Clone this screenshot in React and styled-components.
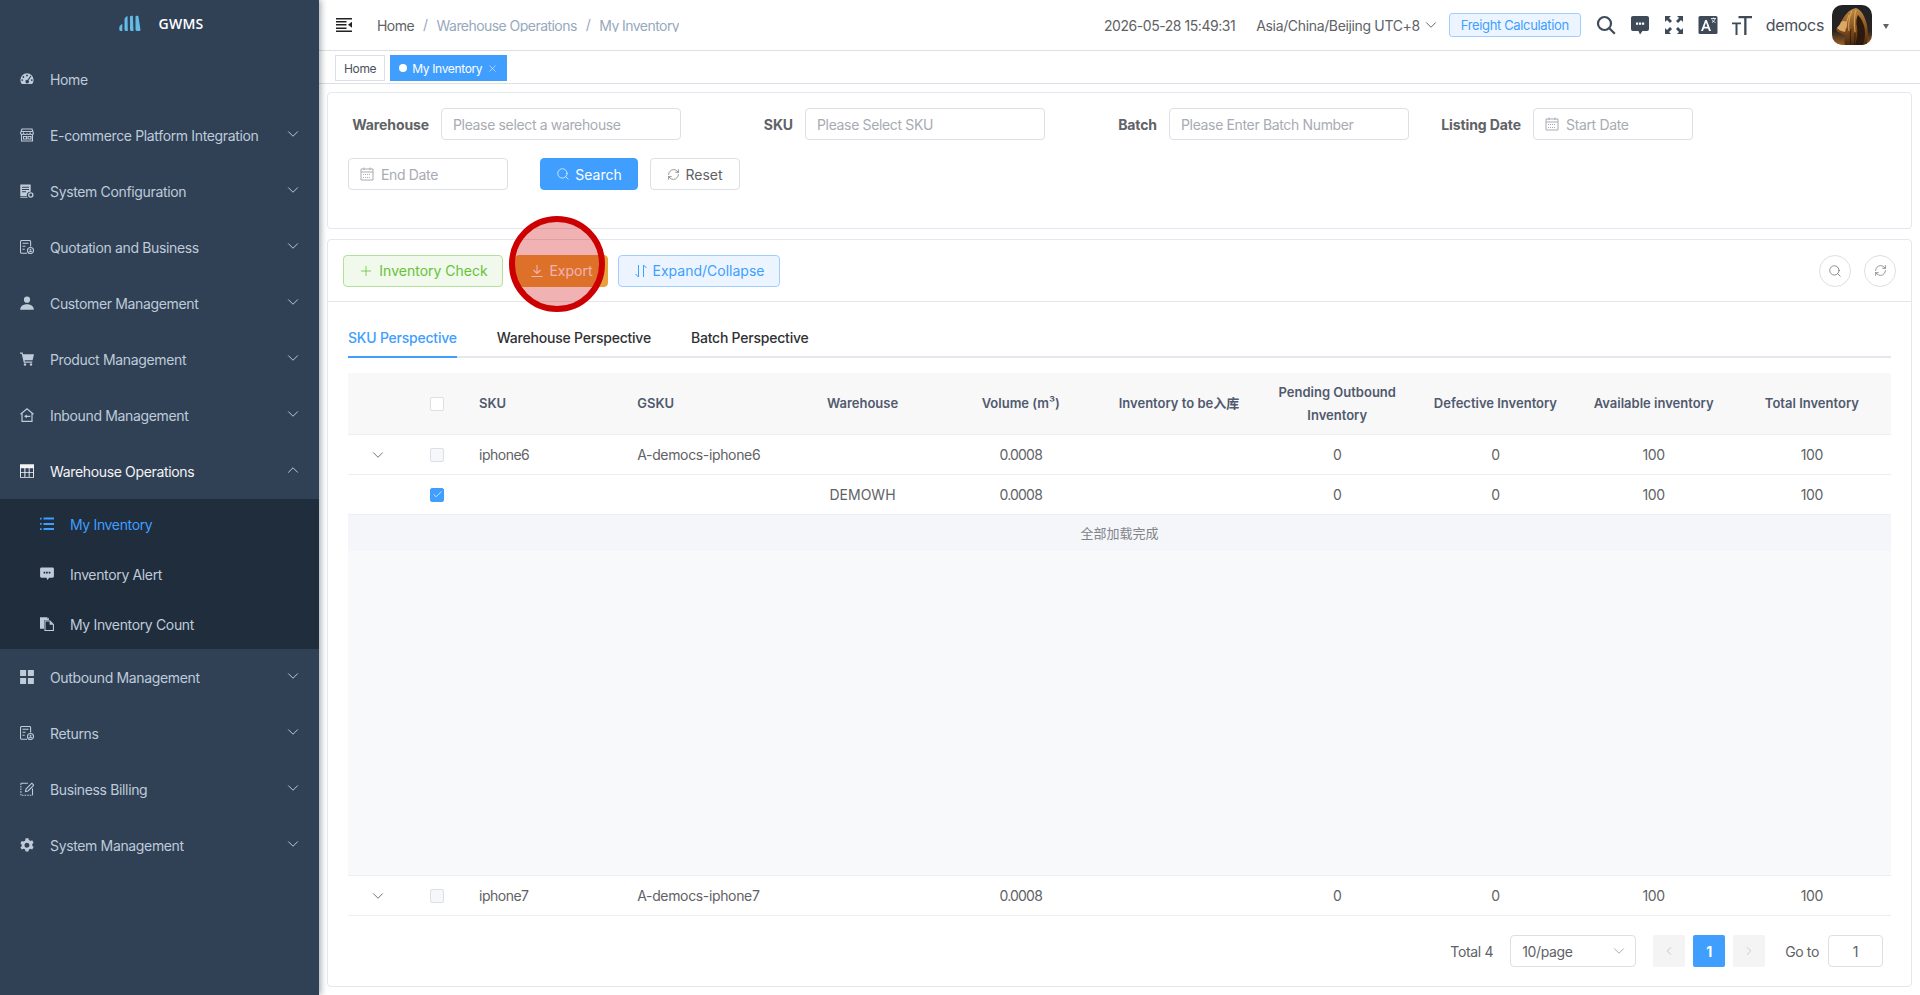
import React from "react";
import styled, { createGlobalStyle } from "styled-components";
import { ChevronDown, ChevronUp, ChevronLeft, ChevronRight, Search, RefreshCw, Plus, X, Check } from "lucide-react";

const Global = createGlobalStyle`
  html, body { margin: 0; padding: 0; height: 100%; background: #fff; overflow: hidden; }
  #root { height: 100%; }
  * { box-sizing: border-box; }
  body { font-family: Inter, "Noto Sans CJK SC", "Liberation Sans", sans-serif; font-size: 14px; color: #606266; letter-spacing: -0.35px; }
`;

const Shell = styled.div`display: flex; width: 1920px; height: 995px; position: relative; overflow: hidden;`;
const Sidebar = styled.aside`
  width: 319px; flex: none; background: #304156; box-shadow: 2px 0 6px rgba(0,21,41,.35); z-index: 2;
`;
const Logo = styled.div`
  height: 51px; display: flex; align-items: center; justify-content: center; gap: 18px; padding: 0 0 5px 3px;
  font-size: 14px; font-weight: 600; color: #fff; font-family: "Open Sans", Inter, sans-serif; letter-spacing: 0.2px;
`;
const MenuRow = styled.div`
  height: 56px; display: flex; align-items: center; padding: 0 20px; position: relative;
  color: ${p => (p.$open ? "#f4f4f5" : "#bfcbd9")}; 
`;
const IconSlot = styled.span`
  width: 14px; height: 14px; display: flex; margin-right: 16px; flex: none;
  svg { width: 14px; height: 14px; display: block; fill: currentColor; }
`;
const Caret = styled.span`
  margin-left: auto; margin-right: -3px; display: flex; color: #bfcbd9;
  position: relative; top: -1px;
`;
const SubMenu = styled.div`background: #1f2d3d; height: 150px;`;
const SubRow = styled.div`
  height: 50px; display: flex; align-items: center; padding-left: 40px;
  color: ${p => (p.$active ? "#409eff" : "#bfcbd9")};
`;
const Main = styled.main`flex: 1; min-width: 0; display: flex; flex-direction: column;`;
const TopBar = styled.header`
  height: 51px; flex: none; border-bottom: 1px solid #dcdfe6; display: flex; align-items: center; padding-left: 17px; color: #606266;
`;
const Crumbs = styled.nav`display: flex; margin-left: 25px; height: 16px; overflow: hidden; align-items: flex-start; margin-top: -2px; letter-spacing: -0.55px;`;
const Crumb = styled.span`color: ${p => (p.$dim ? "#97a8be" : "#606266")}; line-height: 19px;`;
const Sep = styled.span`color: #97a8be; margin: 0 9px; line-height: 17px;`;
const TopRight = styled.div`margin-left: auto; display: flex; align-items: center; color: #606266;`;
const Clock = styled.span`margin-right: 21px; white-space: nowrap; letter-spacing: -0.45px;`;
const Zone = styled.span`display: flex; align-items: center; gap: 2px; margin-right: 9px; white-space: nowrap;`;
const Freight = styled.button`
  height: 24px; width: 132px; padding: 0; font: inherit; font-size: 13px; letter-spacing: -0.35px; color: #409eff; background: #ecf5ff;
  border: 1px solid #a0cfff; border-radius: 3px; margin-right: 15px;
`;
const TopIcon = styled.span`
  width: 20px; height: 20px; display: flex; margin-right: 14px; color: #3f4a59;
  svg { width: 20px; height: 20px; display: block; }
`;
const UserName = styled.span`font-size: 16px; color: #4a4f57; margin-right: 8px;`;
const Avatar = styled.span`width: 40px; height: 40px; border-radius: 10px; overflow: hidden; display: block; svg { display: block; }`;
const DropCaret = styled.span`
  width: 0; height: 0; margin: 2px 31px 0 11px; border-left: 3.5px solid transparent; border-right: 3.5px solid transparent; border-top: 5px solid #606266;
`;
const TagBar = styled.div`
  height: 33px; flex: none; border-bottom: 1px solid #dcdfe6; padding: 4px 0 0 16px; display: flex; gap: 5px; align-items: flex-start;
`;
const Tag = styled.span`
  height: 26px; display: flex; align-items: center; font-size: 12px; padding: 0 8px; white-space: nowrap;
  border: 1px solid ${p => (p.$active ? "#409eff" : "#dcdfe6")};
  background: ${p => (p.$active ? "#409eff" : "#fff")};
  color: ${p => (p.$active ? "#fff" : "#495060")};
`;
const Dot = styled.i`width: 8px; height: 8px; background: #fff; border-radius: 50%; margin-right: 5px;`;
const TagClose = styled.span`display: flex; margin-left: 5px; margin-top: 1px;`;
const Content = styled.div`flex: 1; padding: 8px; display: flex; flex-direction: column; gap: 10px; min-height: 0;`;
const Card = styled.section`border: 1px solid #e4e7ed; border-radius: 4px; background: #fff;`;
const FilterCard = styled(Card)`height: 137px; flex: none; padding: 15px 0 0 13px;`;
const FormRow = styled.div`display: flex; align-items: center; height: 32px; margin-bottom: 18px;`;
const Field = styled.div`display: flex; align-items: center; width: 340px; margin-right: 24px;  &:last-child { margin-right: 0; width: 260px; }`;
const Label = styled.label`width: 100px; flex: none; padding-right: 12px; text-align: right; font-weight: 700; color: #606266; letter-spacing: -0.1px;`;
const Input = styled.div`
  height: 32px; width: ${p => p.$w || 240}px; flex: none; border: 1px solid #dcdfe6; border-radius: 4px; display: flex; align-items: center; padding: 0 11px;
  color: #a8abb2; font-size: 14px; white-space: nowrap;
  svg { margin-right: 7px; flex: none; color: #a8abb2; }
`;
const DateInput = styled(Input)`margin-left: ${p => p.$ml || 0}px;`;
const Btn = styled.button`
  height: 32px; padding: 0; font: inherit; font-size: 14px; letter-spacing: 0; width: ${p => p.$w}px; margin-left: ${p => p.$ml || 0}px; border-radius: 4px; flex: none;
  display: flex; align-items: center; justify-content: center; gap: 5px;
  color: ${p => p.$color}; background: ${p => p.$bg}; border: 1px solid ${p => p.$border};
`;
const TableCard = styled(Card)`flex: 1; display: flex; flex-direction: column; min-height: 0;`;
const Toolbar = styled.div`
  height: 62px; flex: none; border-bottom: 1px solid #e4e7ed; display: flex; align-items: center; padding: 0 15px;
`;
const Spacer = styled.div`flex: 1;`;
const Circle = styled.span`
  width: 32px; height: 32px; flex: none; border-radius: 50%; border: 1px solid #dcdfe6; display: flex; align-items: center; justify-content: center; color: #606266; margin-left: ${p => p.$ml || 0}px;
`;
const Body = styled.div`flex: 1; padding: 19px 20px 0 20px; display: flex; flex-direction: column; min-height: 0;`;
const Tabs = styled.div`display: flex; gap: 40px; border-bottom: 2px solid #e4e7ed; height: 37px; flex: none; margin-bottom: 15px;`;
const TabItem = styled.div`
  height: 37px; line-height: 34px; font-weight: 500; letter-spacing: -0.22px; color: ${p => (p.$active ? "#409eff" : "#303133")};
  border-bottom: 2px solid ${p => (p.$active ? "#409eff" : "transparent")}; white-space: nowrap;
`;
const Grid = styled.div`
  display: grid; grid-template-columns: 59px 60px repeat(9, 1fr); align-items: center; border-bottom: 1px solid #ebeef5; flex: none;
  height: ${p => p.$h || 40}px; background: ${p => p.$bg || "#fff"};
`;
const Cell = styled.div`
  padding: 0 ${p => (p.$left ? "12px" : "4px")}; text-align: ${p => (p.$left ? "left" : "center")}; color: #606266; white-space: nowrap; display: ${p => (p.$flex ? "flex" : "block")}; justify-content: center; min-width: 0;
  letter-spacing: ${p => p.$ls ?? -0.35}px;
`;
const HeadCell = styled(Cell)`font-weight: 600; font-size: 13px; color: #515a6e; line-height: 23px; white-space: normal; letter-spacing: 0;`;
const Box = styled.span`
  width: 14px; height: 14px; border-radius: 2px; display: flex; align-items: center; justify-content: center; color: #fff;
  border: 1px solid ${p => (p.$checked ? "#409eff" : "#dcdfe6")}; background: ${p => (p.$checked ? "#409eff" : p.$dis ? "#f5f7fa" : "#fff")};
`;
const Expanded = styled.div`flex: 1; min-height: 0; background: #f8f9fa; border-bottom: 1px solid #ebeef5; display: flex; flex-direction: column;`;
const LoadDone = styled.div`height: 36px; flex: none; background: #f4f6f9; font-size: 13px; letter-spacing: 0; color: #82848a; text-align: center; line-height: 36px; font-family: "Noto Sans CJK SC", sans-serif;`;
const Pager = styled.div`height: 70px; flex: none; display: flex; align-items: center; justify-content: flex-end; padding-right: 8px; color: #606266;`;
const Select = styled.div`
  width: 126px; height: 32px; margin-left: 17px; border: 1px solid #dcdfe6; border-radius: 4px; display: flex; align-items: center; justify-content: space-between; padding: 0 7px 0 11px; color: #606266;
  svg { color: #a8abb2; }
`;
const PageBtn = styled.span`
  width: 32px; height: 32px; border-radius: 2px; margin-left: ${p => p.$ml}px; display: flex; align-items: center; justify-content: center; font-weight: 700;
  background: ${p => (p.$active ? "#409eff" : "#f4f4f5")}; color: ${p => (p.$active ? "#fff" : "#a8abb2")};
`;
const GoInput = styled.span`width: 55px; height: 32px; margin-left: 9px; border: 1px solid #dcdfe6; border-radius: 4px; display: flex; align-items: center; justify-content: center;`;
const GoLabel = styled.span`margin-left: 20px;`;
const Ring = styled.div`
  position: absolute; left: 509px; top: 216px; width: 96px; height: 96px; border-radius: 50%; border: 6px solid #c00; background: rgba(204,0,0,.3); z-index: 5; pointer-events: none;
`;

const S = { fill: "none", stroke: "currentColor", strokeWidth: 1.1 };
const icons = {
  gauge: <svg viewBox="0 0 14 14"><path fillRule="evenodd" d="M7 1.2A6.6 6.6 0 0 0 .4 7.8c0 1.6.5 3 1.4 4.2h10.4a6.6 6.6 0 0 0 1.4-4.2A6.6 6.6 0 0 0 7 1.2zM7 2.6a.9.9 0 1 1 0 1.8.9.9 0 0 1 0-1.8zM3.4 4.1a.9.9 0 1 1 0 1.8.9.9 0 0 1 0-1.8zM2.2 7.2a.9.9 0 1 1 0 1.8.9.9 0 0 1 0-1.8zM11.8 7.2a.9.9 0 1 1 0 1.8.9.9 0 0 1 0-1.8zM10.6 3.6l.8.6-2.9 4.3a1.7 1.7 0 1 1-1-.6z"/></svg>,
  store: <svg viewBox="0 0 14 14"><g {...S}><path d="M2 1h10l1.4 4.2c0 .8-.7 1.3-1.6 1.3s-1.5-.5-1.7-1.2c-.3.7-.9 1.2-1.8 1.2S7 6 7 5.3C6.9 6 6.2 6.5 5.3 6.5S3.8 6 3.6 5.3C3.4 6 2.900 6.5 2 6.5S.6 6 .6 5.2z"/><path d="M1.5 6.5V13h11V6.5M1 3.5h12"/><path d="M3.5 8.5h3V11h-3zM8 8.5h3V11H8z"/></g></svg>,
  config: <svg viewBox="0 0 14 14"><path fillRule="evenodd" d="M.3.6h10.4v7.100a3.4 3.4 0 0 0-3.800 4.300H.3zM2 2.700h7v1H2zM2 5h7v1H2zM2 7.300h4v1H2z"/><circle cx="10.800" cy="11" r="2.100" {...S} strokeWidth="1.300"/><path d="M.3 12.700h6.900l.5 1H.3z"/></svg>,
  quote: <svg viewBox="0 0 14 14"><g {...S}><path d="M7 13.300H1.800c-.8 0-1.300-.5-1.300-1.300V1.800C.5 1 1 .5 1.800.5h7.500c.8 0 1.300.5 1.300 1.300V6.500"/><path d="M2.500 3.300h6M2.500 6.200h3M2.500 9.200h2.200"/><circle cx="10.500" cy="10.500" r="3"/></g><circle cx="10.500" cy="9.700" r=".9"/><path d="M8.900 12.100c.2-1 .8-1.400 1.600-1.400s1.400.4 1.600 1.400z"/></svg>,
  user: <svg viewBox="0 0 14 14"><circle cx="7" cy="3.700" r="3.100"/><path d="M.2 13.700c0-3.300 2.800-5.400 6.800-5.400s6.800 2.100 6.800 5.400z"/></svg>,
  cart: <svg viewBox="0 0 14 14"><path d="M0 .6h2.600l.5 1.700H14l-1.400 6H4.600l.3 1.300h7.400v1.200H3.800L1.700 1.800H0z"/><circle cx="5" cy="12.500" r="1.200"/><circle cx="11" cy="12.500" r="1.200"/></svg>,
  inbound: <svg viewBox="0 0 14 14"><path {...S} strokeWidth="1.200" d="M.5 6.300 7 .9l6.500 5.400M2 5.500v7.900h10V5.500"/><path d="M4 8.300 6.800 6.400v1.300h3.500v1.200H6.800v1.300z"/></svg>,
  table: <svg viewBox="0 0 14 14"><path fillRule="evenodd" d="M0 .2h14v13.600H0zM.9 4.300v3.900h3.500V4.300zm4.500 0v3.900h3.300V4.300zm4.200 0v3.900h3.500V4.300zM.9 9.100v3.800h3.500V9.100zm4.500 0v3.800h3.300V9.100zm4.200 0v3.800h3.500V9.100z"/></svg>,
  list: <svg viewBox="0 0 14 14"><path d="M0 .8h1.600v1.700H0zM0 6h1.600v1.700H0zM0 11.300h1.600V13H0zM3.500.6H14v2H3.500zM3.500 5.900H14v2H3.500zM3.500 11.100H14v2H3.500z"/></svg>,
  chat: <svg viewBox="0 0 14 14"><path fillRule="evenodd" d="M1.500.6h11c.8 0 1.400.6 1.400 1.400v7.300c0 .8-.6 1.400-1.400 1.400H9.200l-1.800 2.400-.9-2.400h-5C.7 10.700.1 10.100.1 9.300V2C.1 1.200.7.600 1.500.600zM3.600 4.700v1.700h1.700V4.700zm2.500 0v1.700h1.700V4.700zm2.600 0v1.700h1.700V4.700z"/></svg>,
  copy: <svg viewBox="0 0 14 14"><path d="M0 .2h7.500v3H4v8.600H0zM8.600.6 9 3.200H6.700z"/><path {...S} strokeWidth="1.100" d="M5 4h5l3.400 3.400v6.100H5z"/><path d="M9.600 4.200v3.500h3.800z"/></svg>,
  grid: <svg viewBox="0 0 14 14"><path d="M.1.100h6v6h-6zM7.900.100h6v6h-6zM.1 7.900h6v6h-6zM7.900 7.900h6v6h-6z"/></svg>,
  edit: <svg viewBox="0 0 14 14"><g {...S}><path strokeDasharray="1.600 1" d="M.9 1.300v12h11.600"/><path d="M.9 1.300h7M12.500 6.500v6.800"/><path d="m5.500 9.500.5-2.500 5.800-5.800 2 2-5.800 5.800z"/></g></svg>,
  gear: <svg viewBox="0 0 14 14"><path fillRule="evenodd" d="M5.600.3h2.800l.5 1.800 1.500.8 1.800-.6 1.400 2.400-1.300 1.300v1.700l1.300 1.300-1.400 2.400-1.800-.6-1.500.8-.5 1.800H5.600l-.5-1.800-1.500-.8-1.800.6L.4 9.600l1.300-1.300V6.600L.4 5.300 1.800 2.900l1.800.6 1.500-.8zM7 4.700a2.500 2.500 0 1 0 0 5 2.500 2.500 0 0 0 0-5z"/></svg>,
};

const CalendarIcon = () => (
  <svg width="14" height="14" viewBox="0 0 14 14" fill="none" stroke="currentColor" strokeWidth="1">
    <path d="M1 2h12v11H1zM1 5h12M4 .5V3M10 .5V3" />
    <path strokeDasharray="1 1" d="M3 7.500h8M3 10.500h8" />
  </svg>
);
const ExportIcon = () => (
  <svg width="14" height="14" viewBox="0 0 14 14" fill="none" stroke="currentColor" strokeWidth="1.100">
    <path d="M7 1v8M3.500 6 7 9.500 10.500 6M1.500 12.500h11" />
  </svg>
);

const MENU_TOP = [
  ["gauge", "Home", false], ["store", "E-commerce Platform Integration", true], ["config", "System Configuration", true],
  ["quote", "Quotation and Business", true], ["user", "Customer Management", true], ["cart", "Product Management", true], ["inbound", "Inbound Management", true],
];
const MENU_BOTTOM = [["grid", "Outbound Management"], ["quote", "Returns"], ["edit", "Business Billing"], ["gear", "System Management"]];
const SUB = [["list", "My Inventory", true], ["chat", "Inventory Alert"], ["copy", "My Inventory Count"]];
const HEADERS = ["Warehouse", "Volume (m³)", "Inventory to be入库", "Pending Outbound Inventory", "Defective Inventory", "Available inventory", "Total Inventory"];

function Row({ expand, name, gsku, wh, checked }) {
  return (
    <Grid>
      <Cell $flex>{expand && <ChevronDown size={18} strokeWidth={1.200} />}</Cell>
      <Cell $flex><Box $checked={checked} $dis={!checked}>{checked && <Check size={11} strokeWidth={1.500} />}</Box></Cell>
      <Cell $left $ls={-0.5}>{name}</Cell>
      <Cell $left>{gsku}</Cell>
      <Cell $ls={0}>{wh}</Cell>
      <Cell $ls={-0.8}>0.0008</Cell>
      <Cell />
      <Cell>0</Cell>
      <Cell>0</Cell>
      <Cell>100</Cell>
      <Cell>100</Cell>
    </Grid>
  );
}

export default function App() {
  return (
    <Shell>
      <Global />
      <Sidebar>
        <Logo>
          <svg width="22" height="17" viewBox="0 0 22 17" fill="#62bce6">
            <path d="M.3 12.500c0-1.500 1.600-3 3-3.500v7H1.800c-1 0-1.500-.7-1.500-1.500zM5.500 4.500c0-1.500 1.500-3 3-3.500l.3 15H7.300c-1 0-1.800-.7-1.800-1.500zM11 1.500c0-.8 2.500-1.200 2.900-.3l.6 14.800H12.700c-1 0-1.700-.7-1.700-1.500zM16.500 1.500c0-.8 2.500-1.200 2.900-.3L21.500 15c0 .7-1 1-2 1h-1.300c-.8 0-1.700-.7-1.700-1.500z" />
          </svg>
          <span>GWMS</span>
        </Logo>
        {MENU_TOP.map(([ic, t, c]) => (
          <MenuRow key={t}>
            <IconSlot>{icons[ic]}</IconSlot>{t}
            {c && <Caret><ChevronDown size={18} strokeWidth={1.300} /></Caret>}
          </MenuRow>
        ))}
        <MenuRow $open>
          <IconSlot>{icons.table}</IconSlot>Warehouse Operations
          <Caret><ChevronUp size={18} strokeWidth={1.300} /></Caret>
        </MenuRow>
        <SubMenu>
          {SUB.map(([ic, t, a]) => (
            <SubRow key={t} $active={a}><IconSlot>{icons[ic]}</IconSlot><span>{t}</span></SubRow>
          ))}
        </SubMenu>
        {MENU_BOTTOM.map(([ic, t]) => (
          <MenuRow key={t}>
            <IconSlot>{icons[ic]}</IconSlot>{t}
            <Caret><ChevronDown size={18} strokeWidth={1.300} /></Caret>
          </MenuRow>
        ))}
      </Sidebar>
      <Main>
        <TopBar>
          <svg width="16" height="14" viewBox="0 0 16 14" fill="#222"><path d="M0 0h16v1.600H0zM0 6h10.500v1.600H0zM0 12.400h16V14H0zM0 3h10.500v1.400H0zM0 9.500h10.500v1.400H0zM16 3.800v6l-4-3z" /></svg>
          <Crumbs>
            <Crumb>Home</Crumb><Sep>/</Sep><Crumb $dim>Warehouse Operations</Crumb><Sep>/</Sep><Crumb $dim>My Inventory</Crumb>
          </Crumbs>
          <TopRight>
            <Clock>2026-05-28 15:49:31</Clock>
            <Zone>Asia/China/Beijing UTC+8<ChevronDown size={18} strokeWidth={1.300} /></Zone>
            <Freight>Freight Calculation</Freight>
            <TopIcon><svg viewBox="0 0 20 20" fill="none" stroke="currentColor" strokeWidth="2.200"><circle cx="8.500" cy="8.500" r="6.500" /><path d="m13.300 13.300 5.500 5.500" /></svg></TopIcon>
            <TopIcon><svg viewBox="0 0 20 20" fill="currentColor"><path fillRule="evenodd" d="M3 1h14c1.200 0 2 .8 2 2v11c0 1.200-.8 2-2 2h-4.500L10 19.500 8.500 16H3c-1.200 0-2-.8-2-2V3c0-1.200.8-2 2-2zm3 6.500v2.200h2.200V7.500zm3 0v2.200h2.200V7.500zm3 0v2.200h2.200V7.500z" /></svg></TopIcon>
            <TopIcon><svg viewBox="0 0 20 20" fill="currentColor"><path d="M1 1h6L5 3l3 3-2 2-3-3-2 2zM19 1v6l-2-2-3 3-2-2 3-3-2-2zM1 19v-6l2 2 3-3 2 2-3 3 2 2zM19 19h-6l2-2-3-3 2-2 3 3 2-2z" /></svg></TopIcon>
            <TopIcon><svg viewBox="0 0 20 20"><rect x=".5" y="1" width="19" height="18" rx="1.500" fill="currentColor" /><path d="M3 16 7.200 5h1.600L13 16h-2l-.9-2.600H5.900L5 16zm3.500-4.200h3L8 7.500z" fill="#fff" /><path d="M13 3.500h5M15.500 2.500v1M14 7.500c1.500-.8 2.500-2 3-4M14 4.500c.5 1.200 1.500 2.300 3.500 3" fill="none" stroke="#fff" strokeWidth=".8" /></svg></TopIcon>
            <TopIcon><svg viewBox="0 0 20 20" fill="currentColor"><path d="M6.500 1H20v2.200h-5.500V20h-2.300V3.200H6.500zM0 7.500h9v1.800H5.500V20H3.500V9.300H0z" /></svg></TopIcon>
            <UserName>democs</UserName>
            <Avatar>
              <svg width="40" height="40" viewBox="0 0 40 40">
                <defs>
                  <linearGradient id="lion" x1="0" y1="0" x2="0" y2="1"><stop offset="0" stopColor="#c08a42" /><stop offset=".5" stopColor="#8a5420" /><stop offset="1" stopColor="#4a2a10" /></linearGradient>
                  <linearGradient id="grd" x1="0" y1="0" x2="0" y2="1"><stop offset="0" stopColor="#1f2226" /><stop offset=".65" stopColor="#2a2420" /><stop offset="1" stopColor="#9c6022" /></linearGradient>
                </defs>
                <rect width="40" height="40" fill="url(#grd)" />
                <path d="M13 40c-1-3-1-6 1-9l-8-4c-2-1-2-3-1-4 2-1 3-3 4-6 3-6 8-13 15-14 6 2 9 9 11 17 1 8 1 14 0 20z" fill="url(#lion)" />
                <path d="M26 10c4 4 7 11 7 18 0 5-1 9-2 12h-8c2-6 3-12 2-18-1-4-1-8 1-12z" fill="#2e1a0c" />
                <path d="M20 6c-3 6-4 12-3 20M24 5c-2 6-2 13-1 22M17 10c-2 4-3 8-3 13" fill="none" stroke="#e0b36a" strokeWidth="1.200" opacity=".75" />
                <path d="M19 24c-1 5-1 10 0 16M23 28c0 4 0 8-1 12" fill="none" stroke="#2e1a0c" strokeWidth="1.200" opacity=".7" />
                <path d="M5 23c2 2 4 3 8 4l2-8c0-2-1-3-3-3-1 0-2 0-3 1-1 3-3 4-4 6z" fill="#d9a865" />
              </svg>
            </Avatar>
            <DropCaret />
          </TopRight>
        </TopBar>
        <TagBar>
          <Tag>Home</Tag>
          <Tag $active><Dot />My Inventory<TagClose><X size={11} strokeWidth={1.200} /></TagClose></Tag>
        </TagBar>
        <Content>
          <FilterCard>
            <FormRow>
              <Field><Label>Warehouse</Label><Input>Please select a warehouse</Input></Field>
              <Field><Label>SKU</Label><Input>Please Select SKU</Input></Field>
              <Field><Label>Batch</Label><Input>Please Enter Batch Number</Input></Field>
              <Field><Label>Listing Date</Label><Input $w={160}><CalendarIcon />Start Date</Input></Field>
            </FormRow>
            <FormRow>
              <DateInput $w={160} $ml={7}><CalendarIcon />End Date</DateInput>
              <Btn $w={98} $ml={32} $color="#fff" $bg="#409eff" $border="#409eff"><Search size={14} strokeWidth={1.200} />Search</Btn>
              <Btn $w={90} $ml={12} $color="#606266" $bg="#fff" $border="#dcdfe6"><RefreshCw size={13} strokeWidth={1.200} />Reset</Btn>
            </FormRow>
          </FilterCard>
          <TableCard>
            <Toolbar>
              <Btn $w={160} $color="#67c23a" $bg="#f0f9eb" $border="#b3e19d"><Plus size={16} strokeWidth={1.200} />Inventory Check</Btn>
              <Btn $w={93} $ml={12} $color="#fff" $bg="#e6a23c" $border="#e6a23c"><ExportIcon />Export</Btn>
              <Btn $w={162} $ml={10} $color="#409eff" $bg="#ecf5ff" $border="#a0cfff">
                <svg width="14" height="14" viewBox="0 0 14 14" fill="none" stroke="currentColor" strokeWidth="1"><path d="M4.500 1v12L1.500 10M9.500 13V1l3 3" /></svg>
                Expand/Collapse
              </Btn>
              <Spacer />
              <Circle><Search size={14} strokeWidth={1.200} /></Circle>
              <Circle $ml={13}><RefreshCw size={13} strokeWidth={1.200} /></Circle>
            </Toolbar>
            <Body>
              <Tabs>
                <TabItem $active>SKU Perspective</TabItem>
                <TabItem>Warehouse Perspective</TabItem>
                <TabItem>Batch Perspective</TabItem>
              </Tabs>
              <Grid $h={62} $bg="#f8f8f9">
                <HeadCell />
                <HeadCell $flex><Box /></HeadCell>
                <HeadCell $left>SKU</HeadCell>
                <HeadCell $left>GSKU</HeadCell>
                {HEADERS.map(h => <HeadCell key={h}>{h}</HeadCell>)}
              </Grid>
              <Row expand name="iphone6" gsku="A-democs-iphone6" />
              <Row checked wh="DEMOWH" />
              <Expanded><LoadDone>全部加载完成</LoadDone></Expanded>
              <Row expand name="iphone7" gsku="A-democs-iphone7" />
              <Pager>
                <span>Total 4</span>
                <Select>10/page<ChevronDown size={18} strokeWidth={1.300} /></Select>
                <PageBtn $ml={17}><ChevronLeft size={14} strokeWidth={1} /></PageBtn>
                <PageBtn $ml={8} $active>1</PageBtn>
                <PageBtn $ml={8}><ChevronRight size={14} strokeWidth={1} /></PageBtn>
                <GoLabel>Go to</GoLabel>
                <GoInput>1</GoInput>
              </Pager>
            </Body>
          </TableCard>
        </Content>
      </Main>
      <Ring />
    </Shell>
  );
}
